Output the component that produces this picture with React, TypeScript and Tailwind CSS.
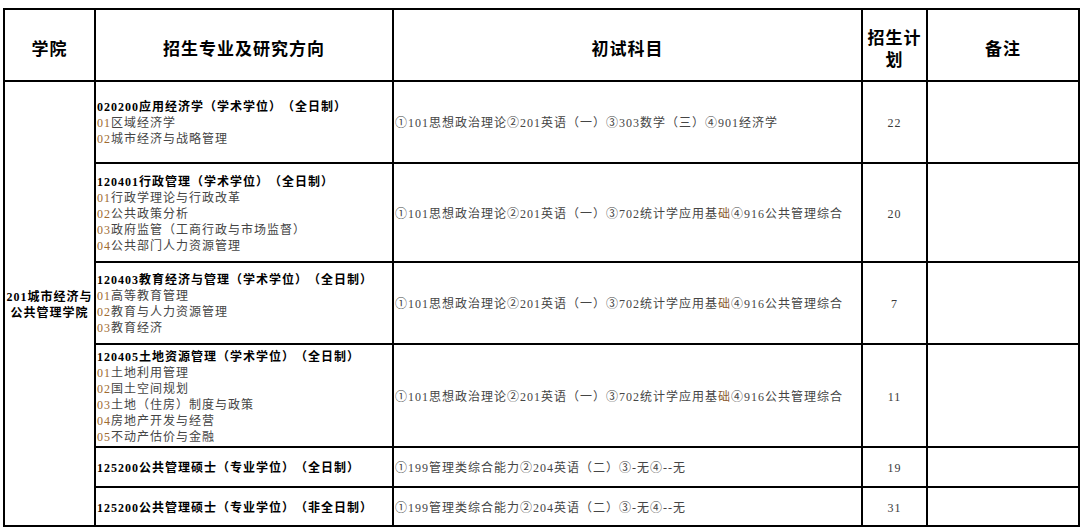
import React from "react";

const body =
  "font-['Liberation_Serif','Noto_Sans_CJK_SC',serif] text-[12px] tracking-[1px] leading-[16px]";
const head =
  "font-['Noto_Sans_CJK_SC',sans-serif] font-bold text-[17px] tracking-[1px] leading-[22px] text-black";

const SUBJ_B = (
  <>
    ①101思想政治理论②201英语（一）③702统计学应用基
    <span className="text-[#8a5a2e]">础</span>④916公共管理综合
  </>
);
const SUBJ_C = <>①199管理类综合能力②204英语（二）③-无④--无</>;

type Row = { title: string; items: string[]; subj: React.ReactNode; n: string };

const rows: Row[] = [
  {
    title: "020200应用经济学（学术学位）（全日制）",
    items: ["01区域经济学", "02城市经济与战略管理"],
    subj: <>①101思想政治理论②201英语（一）③303数学（三）④901经济学</>,
    n: "22",
  },
  {
    title: "120401行政管理（学术学位）（全日制）",
    items: ["01行政学理论与行政改革", "02公共政策分析", "03政府监管（工商行政与市场监督）", "04公共部门人力资源管理"],
    subj: SUBJ_B,
    n: "20",
  },
  {
    title: "120403教育经济与管理（学术学位）（全日制）",
    items: ["01高等教育管理", "02教育与人力资源管理", "03教育经济"],
    subj: SUBJ_B,
    n: "7",
  },
  {
    title: "120405土地资源管理（学术学位）（全日制）",
    items: ["01土地利用管理", "02国土空间规划", "03土地（住房）制度与政策", "04房地产开发与经营", "05不动产估价与金融"],
    subj: SUBJ_B,
    n: "11",
  },
  { title: "125200公共管理硕士（专业学位）（全日制）", items: [], subj: SUBJ_C, n: "19" },
  { title: "125200公共管理硕士（专业学位）（非全日制）", items: [], subj: SUBJ_C, n: "31" },
];

export default function App() {
  return (
    <div className="min-h-[531px] w-[1084px] bg-white pl-[3px] pt-[8px] [text-spacing-trim:space-all]">
      <div className="grid w-fit grid-cols-[89px_296px_467px_63px_150px] grid-rows-[70px_80px_97px_80px_101px_38px_37px] gap-[2px] bg-black p-[2px]">
        {/* header */}
        <div className={`flex items-center justify-center bg-white pt-[6px] ${head}`}>学院</div>
        <div className={`flex items-center justify-center bg-white pt-[6px] ${head}`}>招生专业及研究方向</div>
        <div className={`flex items-center justify-center bg-white pt-[6px] ${head}`}>初试科目</div>
        <div className={`flex flex-col items-center justify-center bg-white pt-[6px] text-center ${head}`}>
          <div className="h-[22px]">招生计</div>
          <div className="h-[22px]">划</div>
        </div>
        <div className={`flex items-center justify-center bg-white pt-[6px] ${head}`}>备注</div>

        {/* merged college cell */}
        <div
          className={`row-span-6 flex flex-col items-center justify-center bg-white pt-[2px] text-center font-bold tracking-[0.8px] text-black ${body}`}
        >
          <div>201城市经济与</div>
          <div>公共管理学院</div>
        </div>

        {rows.map((r, i) => (
          <React.Fragment key={i}>
            <div className={`flex flex-col justify-center bg-white pl-[1px] pt-[2px] ${body}`}>
              <div className="whitespace-nowrap font-bold text-black">{r.title}</div>
              {r.items.map((it, j) => (
                <div key={j} className="whitespace-nowrap text-[#454545]">
                  <span className="text-[#9e6a30]">{it.slice(0, 2)}</span>
                  {it.slice(2)}
                </div>
              ))}
            </div>
            <div className={`flex items-center bg-white pl-[1px] pt-[2px] text-[#454545] ${body}`}>
              <div className="whitespace-nowrap">{r.subj}</div>
            </div>
            <div className={`flex items-center justify-center bg-white pt-[2px] text-[#3a3a3a] ${body}`}>
              {r.n}
            </div>
            <div className="bg-white" />
          </React.Fragment>
        ))}
      </div>
    </div>
  );
}
